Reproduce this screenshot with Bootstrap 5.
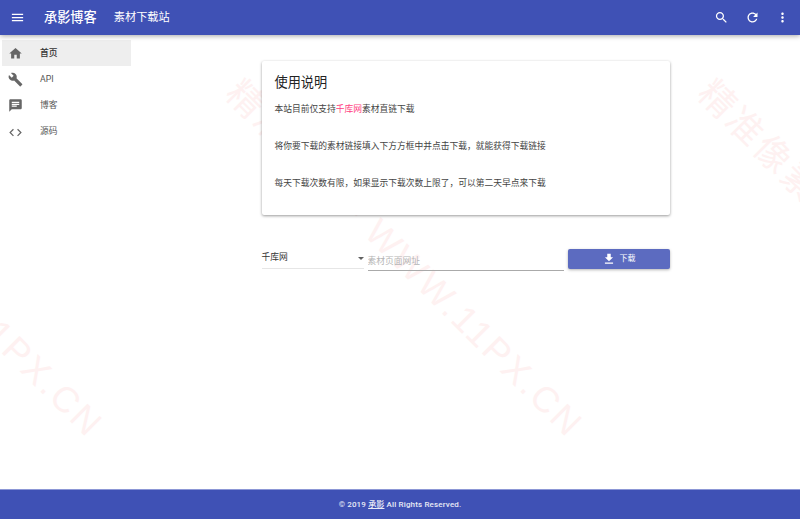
<!DOCTYPE html>
<html lang="zh-CN">
<head>
<meta charset="UTF-8">
<meta name="viewport" content="width=device-width, initial-scale=1.0">
<title>素材下载站</title>
<link href="https://cdn.jsdelivr.net/npm/bootstrap@5.3.0/dist/css/bootstrap.min.css" rel="stylesheet">
<style>
    html, body { height: 100%; }
    body { font-family: Roboto, "Noto Sans CJK SC", sans-serif; font-size: 8.75px; color: #333; background: #fff; overflow: hidden; position: relative; }
    svg { fill: currentColor; display: block; }

    .top-bar { height: 35px; padding: 0; background: #3f51b5; color: #fff; box-shadow: 0 1px 5px rgba(0,0,0,.35); position: relative; z-index: 3; flex-wrap: nowrap; }
    .top-bar .menu-btn { margin-left: 10px; width: 15px; margin-right: 19px; }
    .top-brand { font-size: 13.2px; font-weight: 500; margin-right: 17px; line-height: 1; }
    .top-title { font-size: 11.2px; line-height: 1; }
    .top-actions { gap: 15.5px; margin-right: 10px; }

    .side-nav { width: 131px; padding-top: 5px; flex: none; background: transparent; position: relative; z-index: 1; }
    .side-nav .list-group-item { height: 26.3px; flex: none; padding: 0 0 0 2px; border: 0; background: transparent; font-size: 8.75px; color: #555; gap: 17px; }
    .side-nav .list-group-item svg { color: #666; margin-left: 6px; }
    .side-nav .list-group-item.active { background: #eee; color: #333; margin-left: 2px; padding-left: 0; font-weight: 500; }

    .page-main { position: relative; z-index: 1; }
    .page-inner { width: 408px; margin: 26px auto 0; }
    .tip-card { height: 154px; padding: 13px; border: 0; border-radius: 2px; box-shadow: 0 1px 3px rgba(0,0,0,.4); background: #fff; }
    .tip-card h5 { font-size: 13.2px; font-weight: 400; line-height: 18px; margin: 0 0 11px; color: #222; }
    .tip-card p { font-size: 8.75px; line-height: 13px; margin: 0 0 24px; color: #444; }
    .tip-link { color: #ff4081; text-decoration: none; }

    .dl-row { margin-top: 32px; gap: 4px; }
    .dl-select { width: 102px; height: 22px; padding: 0; border: 0; border-bottom: 1px solid #e6e6e6; border-radius: 0; font-size: 8.75px; line-height: 21px; color: #333; position: relative; background: transparent; }
    .dl-select::after { content: ""; position: absolute; right: 0; top: 10px; border: 3.2px solid transparent; border-top-color: #616161; }
    .dl-input { width: 196px; height: 23px; padding: 4px 0 0; border: 0; border-bottom: 1px solid #aaa; border-radius: 0; font-size: 8.75px; margin-top: 1px; background: transparent; box-shadow: none; }
    .dl-input::placeholder { color: #b5b5b5; }
    .dl-btn { width: 102px; height: 20px; margin-top: 2px; padding: 0; border: 0; border-radius: 2px; background: #5c6bc0; color: #fff; font-size: 8px; gap: 4px; box-shadow: 0 1px 3px rgba(0,0,0,.3); }

    .page-foot { height: 30px; background: #3f51b5; border-top: 1px solid #8c97d6; color: #e8eaf6; font-size: 8px; font-weight: 500; letter-spacing: .15px; position: relative; z-index: 2; }
    .page-foot a { color: inherit; }

    .wm-line { position: absolute; top: 74px; font-family: "Liberation Sans", "Noto Sans CJK SC", sans-serif; font-size: 36px; line-height: 1; letter-spacing: 3px; color: #fef1f1; white-space: nowrap; transform: rotate(45deg); transform-origin: left top; z-index: 0; }
    .wm-a { left: -235px; }
    .wm-b { left: 245px; }
    .wm-c { left: 717px; }
</style>
</head>
<body class="d-flex flex-column">

<div class="wm-line wm-a">精准像素 - WWW.11PX.CN</div>
<div class="wm-line wm-b">精准像素 - WWW.11PX.CN</div>
<div class="wm-line wm-c">精准像素 - WWW.11PX.CN</div>

<nav class="navbar top-bar">
    <div class="d-flex align-items-center">
        <svg class="menu-btn" width="15" height="15" viewBox="0 0 24 24"><path d="M3 18h18v-2H3v2zm0-5h18v-2H3v2zm0-7v2h18V6H3z"/></svg>
        <span class="top-brand">承影博客</span>
        <span class="top-title">素材下载站</span>
    </div>
    <div class="d-flex align-items-center top-actions">
        <svg width="15" height="15" viewBox="0 0 24 24"><path d="M15.5 14h-.79l-.28-.27C15.41 12.59 16 11.11 16 9.5 16 5.91 13.09 3 9.5 3S3 5.91 3 9.5 5.91 16 9.5 16c1.61 0 3.09-.59 4.23-1.57l.27.28v.79l5 4.99L20.49 19l-4.99-5zm-6 0C7.01 14 5 11.99 5 9.5S7.01 5 9.5 5 14 7.01 14 9.5 11.99 14 9.5 14z"/></svg>
        <svg width="15" height="15" viewBox="0 0 24 24"><path d="M17.65 6.35C16.2 4.9 14.21 4 12 4c-4.42 0-7.99 3.58-7.99 8s3.57 8 7.99 8c3.73 0 6.84-2.55 7.73-6h-2.08c-.82 2.33-3.04 4-5.65 4-3.31 0-6-2.69-6-6s2.69-6 6-6c1.66 0 3.14.69 4.22 1.78L13 11h7V4l-2.35 2.35z"/></svg>
        <svg width="15" height="15" viewBox="0 0 24 24"><path d="M12 8c1.1 0 2-.9 2-2s-.9-2-2-2-2 .9-2 2 .9 2 2 2zm0 2c-1.1 0-2 .9-2 2s.9 2 2 2 2-.9 2-2-.9-2-2-2zm0 6c-1.1 0-2 .9-2 2s.9 2 2 2 2-.9 2-2-.9-2-2-2z"/></svg>
    </div>
</nav>

<div class="d-flex flex-fill">
    <div class="side-nav list-group list-group-flush">
        <a class="list-group-item active d-flex align-items-center" href="#">
            <svg width="15" height="15" viewBox="0 0 24 24"><path d="M10 20v-6h4v6h5v-8h3L12 3 2 12h3v8z"/></svg>首页
        </a>
        <a class="list-group-item d-flex align-items-center" href="#">
            <svg width="15" height="15" viewBox="0 0 24 24"><path d="M22.7 19l-9.1-9.1c.9-2.3.4-5-1.5-6.9-2-2-5-2.4-7.4-1.3L9 6 6 9 1.6 4.7C.4 7.1.9 10.1 2.9 12.1c1.9 1.9 4.6 2.4 6.9 1.5l9.1 9.1c.4.4 1 .4 1.4 0l2.3-2.3c.5-.4.5-1.1.1-1.4z"/></svg>API
        </a>
        <a class="list-group-item d-flex align-items-center" href="#">
            <svg width="15" height="15" viewBox="0 0 24 24"><path d="M20 2H4c-1.1 0-1.99.9-1.99 2L2 22l4-4h14c1.1 0 2-.9 2-2V4c0-1.1-.9-2-2-2zM6 9h12v2H6V9zm8 5H6v-2h8v2zm4-6H6V6h12v2z"/></svg>博客
        </a>
        <a class="list-group-item d-flex align-items-center" href="#">
            <svg width="15" height="15" viewBox="0 0 24 24"><path d="M9.4 16.6L4.8 12l4.6-4.6L8 6l-6 6 6 6 1.4-1.4zm5.2 0l4.6-4.6-4.6-4.6L16 6l6 6-6 6-1.4-1.4z"/></svg>源码
        </a>
    </div>

    <main class="page-main flex-fill">
        <div class="page-inner">
            <div class="card tip-card">
                <h5>使用说明</h5>
                <p>本站目前仅支持<a class="tip-link" href="#">千库网</a>素材直链下载</p>
                <p>将你要下载的素材链接填入下方方框中并点击下载，就能获得下载链接</p>
                <p>每天下载次数有限，如果显示下载次数上限了，可以第二天早点来下载</p>
            </div>
            <div class="d-flex dl-row">
                <div class="dl-select">千库网</div>
                <input type="text" class="form-control dl-input" placeholder="素材页面网址">
                <button type="button" class="btn dl-btn d-flex align-items-center justify-content-center">
                    <svg width="14" height="14" viewBox="0 0 24 24"><path d="M19 9h-4V3H9v6H5l7 7 7-7zM5 18v2h14v-2H5z"/></svg>下载
                </button>
            </div>
        </div>
    </main>
</div>

<footer class="page-foot d-flex align-items-center justify-content-center">
    <span>© 2019 <a href="#">承影</a> All Rights Reserved.</span>
</footer>

<script src="https://cdn.jsdelivr.net/npm/bootstrap@5.3.0/dist/js/bootstrap.bundle.min.js"></script>
</body>
</html>
